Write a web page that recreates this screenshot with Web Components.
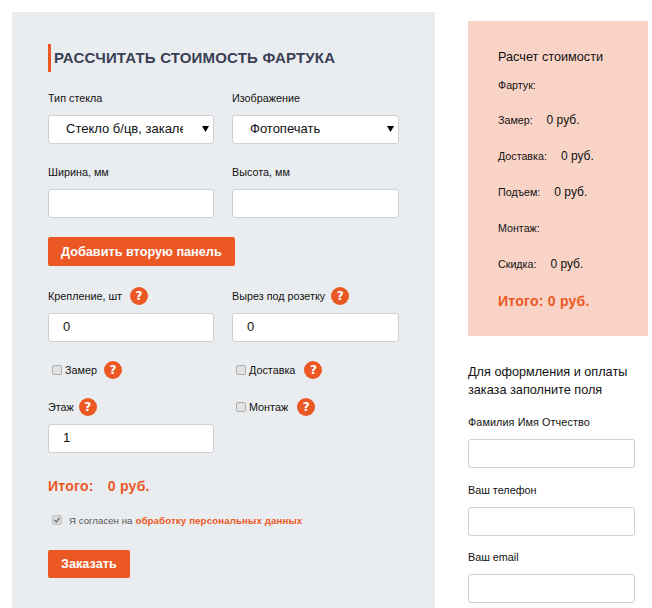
<!DOCTYPE html>
<html lang="ru"><head><meta charset="utf-8"><title>Фартук</title>
<style>
html,body{margin:0;padding:0;background:#fff;height:608px;overflow:hidden}
body{font-family:"Liberation Sans",Arial,sans-serif;color:#111}
</style></head><body>
<calc-page>
  <calc-form>
    <form-title>РАССЧИТАТЬ СТОИМОСТЬ ФАРТУКА</form-title>
    <form-row style="margin-top:17px">
      <form-field label="Тип стекла" kind="select" value="Стекло б/цв, закаленное"></form-field>
      <form-field label="Изображение" kind="select" value="Фотопечать"></form-field>
    </form-row>
    <form-row style="margin-top:19px">
      <form-field label="Ширина, мм"></form-field>
      <form-field label="Высота, мм"></form-field>
    </form-row>
    <action-button style="margin-top:19px">Добавить вторую панель</action-button>
    <form-row style="margin-top:21px">
      <form-field label="Крепление, шт" value="0" help="8"></form-field>
      <form-field label="Вырез под розетку" value="0" help="6"></form-field>
    </form-row>
    <form-row style="margin-top:19px;height:19px">
      <check-item label="Замер" help="7"></check-item>
      <check-item label="Доставка" help="9"></check-item>
    </form-row>
    <form-row style="margin-top:18px">
      <form-field label="Этаж" value="1" help="5"></form-field>
      <check-item label="Монтаж" help="9"></check-item>
    </form-row>
    <total-line style="margin-top:24px">Итого: <span style="margin-left:10px">0 руб.</span></total-line>
    <consent-line style="margin-top:17px"></consent-line>
    <action-button short style="margin-top:22px">Заказать</action-button>
  </calc-form>
  <calc-side>
    <price-panel>
      <price-head>Расчет стоимости</price-head>
      <price-row label="Фартук:" style="height:35px"></price-row>
      <price-row label="Замер:" value="0 руб."></price-row>
      <price-row label="Доставка:" value="0 руб."></price-row>
      <price-row label="Подъем:" value="0 руб."></price-row>
      <price-row label="Монтаж:"></price-row>
      <price-row label="Скидка:" value="0 руб."></price-row>
      <total-line>Итого: 0 руб.</total-line>
    </price-panel>
    <order-form>
      <form-field label="Фамилия Имя Отчество" tracking=".1"></form-field>
      <form-field label="Ваш телефон" style="margin-bottom:12px"></form-field>
      <form-field label="Ваш email"></form-field>
    </order-form>
  </calc-side>
</calc-page>
<script>
const ORANGE='#eb5823';
function define(name,css,html){
  customElements.define(name,class extends HTMLElement{
    constructor(){super();this.attachShadow({mode:'open'});}
    connectedCallback(){
      this.shadowRoot.innerHTML='<style>'+css+'</style>'+(typeof html==='function'?html(this):html);
    }
  });
}
const helpTag=g=>g?`<help-mark style="margin-left:${g}px"></help-mark>`:'';
define('calc-page',':host{display:flex;align-items:flex-start;padding:12px 0 0 12px}','<slot></slot>');
define('calc-form',':host{display:block;box-sizing:border-box;width:423px;height:596px;background:#eaedf0;padding:32px 36px 0}','<slot></slot>');
define('calc-side',':host{display:block;width:180px;margin:9px 0 0 33px}','<slot></slot>');
define('form-title',`:host{display:block;height:28px;line-height:28px;border-left:3px solid ${ORANGE};padding-left:3px;font-size:15px;font-weight:bold;color:#3a3f55;letter-spacing:.18px;white-space:nowrap}`,'<slot></slot>');
define('form-row',':host{display:grid;grid-template-columns:166px 167px;column-gap:18px;align-items:start}','<slot></slot>');
define('form-field',`:host{display:block}
.l{display:flex;align-items:center;height:18px;font-size:10.8px;color:#111;white-space:nowrap}
.b{position:relative;display:block;margin-top:8px}
input,select{display:block;box-sizing:border-box;width:100%;height:29px;margin:0;border:1px solid #cfd0d3;border-radius:3px;background:#fff;font:13px "Liberation Sans",Arial,sans-serif;color:#111;padding:0 14px 2px;outline:0;appearance:none;-webkit-appearance:none}
select{padding:0 30px 2px 17px}
svg{position:absolute;right:5px;top:11px;display:block}`,
el=>{
  const v=el.getAttribute('value')||'',k=el.getAttribute('kind'),t=el.getAttribute('tracking');
  const ctl=k==='select'
    ?`<select><option>${v}</option></select><svg width="7" height="6" viewBox="0 0 7 6"><path d="M0 0h7L3.5 6z" fill="#000"/></svg>`
    :`<input type="text" value="${v}">`;
  return `<div class="l"${t?` style="letter-spacing:${t}px"`:''}>${el.getAttribute('label')}${helpTag(el.getAttribute('help'))}</div><div class="b">${ctl}</div>`;
});
define('help-mark',`:host{display:inline-flex;align-items:center;justify-content:center;box-sizing:border-box;width:18px;height:18px;border-radius:50%;background:${ORANGE};color:#fff;font:bold 12px/18px "DejaVu Sans",sans-serif;flex:none}`,'?');
define('check-item',`:host{display:flex;align-items:center;height:18px;padding-left:4px;font-size:10.8px;color:#111;white-space:nowrap}
i{display:block;box-sizing:border-box;width:10px;height:10px;border:1px solid #adadad;border-radius:2px;background:#e2e2e2;margin-right:3px}`,
el=>`<i></i>${el.getAttribute('label')}${helpTag(el.getAttribute('help'))}`);
define('action-button',`:host{display:block;width:max-content}
button{display:block;height:29px;border:0;border-radius:2px;background:${ORANGE};color:#fff;font:bold 12.7px "Liberation Sans",Arial,sans-serif;padding:0 13px;margin:0}
:host([short]) button{height:28px}`,'<button type="button"><slot></slot></button>');
define('total-line',`:host{display:block;font-size:14px;letter-spacing:.25px;font-weight:bold;color:${ORANGE};line-height:18px;white-space:nowrap}`,'<slot></slot>');
define('consent-line',`:host{display:flex;align-items:center;height:16px;padding-left:4px;font-size:9.7px;color:#555;white-space:nowrap}
svg{display:block;margin-right:7px}
a{color:${ORANGE};font-weight:bold;margin-left:3px;text-decoration:none;letter-spacing:.12px}`,
`<svg width="10" height="10" viewBox="0 0 10 10"><rect x=".5" y=".5" width="9" height="9" rx="1.5" fill="#dcdcdc" stroke="#c4c4c4"/><path d="M2.3 5l2 2 3.4-4.2" fill="none" stroke="#7c7c7c" stroke-width="1.6"/></svg>Я согласен на <a href="#">обработку персональных данных</a>`);
define('price-panel',':host{display:block;box-sizing:border-box;height:315px;background:#f9d3c6;padding:27px 0 0 30px}','<slot></slot>');
define('price-head',':host{display:block;font-size:12.7px;line-height:18px;color:#111;margin-bottom:11px}','<slot></slot>');
define('price-row',`:host{display:block;height:36px;line-height:16px;font-size:10.7px;color:#111;white-space:nowrap}
b{font-weight:normal;font-size:12px;margin-left:14px}`,
el=>`${el.getAttribute('label')}${el.getAttribute('value')?`<b>${el.getAttribute('value')}</b>`:''}`);
define('order-form',`:host{display:block;width:167px;margin-top:27px;font-size:12.7px;line-height:18px;color:#111}
p{margin:0 0 14px}
::slotted(form-field){margin-bottom:13px}`,'<p>Для оформления и оплаты заказа заполните поля</p><slot></slot>');
</script></body></html>
